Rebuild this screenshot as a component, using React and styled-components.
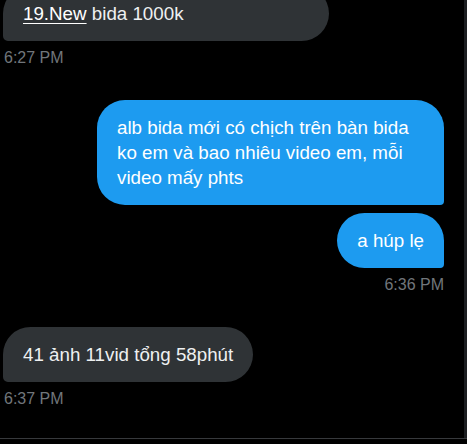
import React from "react";
import styled, { createGlobalStyle } from "styled-components";

const GlobalStyle = createGlobalStyle`
  html, body {
    margin: 0;
    padding: 0;
    background: #000;
  }
  body {
    font-family: "Liberation Sans", Arial, sans-serif;
    -webkit-font-smoothing: antialiased;
  }
`;

const Screen = styled.div`
  width: 467px;
  height: 444px;
  display: flex;
  flex-direction: column;
  background: #000;
  overflow: hidden;
`;

const Body = styled.div`
  display: flex;
  height: 438px;
  border-bottom: 1px solid #37393c;
`;

const Conversation = styled.div`
  flex: 1;
  padding: 0 20px 0 3px;
  overflow: hidden;
`;

const ScrollTrack = styled.div`
  width: 3px;
  background: #1c1e21;
`;

// scrolled: the first bubble starts above the visible area
const Thread = styled.div`
  display: flex;
  flex-direction: column;
  margin-top: -14px;
`;

const Group = styled.div`
  display: flex;
  flex-direction: column;
  align-items: ${(p) => (p.$sent ? "flex-end" : "flex-start")};
  padding-bottom: 32px;
`;

const Stack = styled.div`
  display: flex;
  flex-direction: column;
  align-items: inherit;
  gap: 8px;
`;

const Bubble = styled.div`
  box-sizing: border-box;
  max-width: 347px;
  width: ${(p) => (p.$width ? `${p.$width}px` : "auto")};
  padding: 15px 20px;
  font-size: 18.75px;
  line-height: 25px;
  color: ${(p) => (p.$sent ? "#ffffff" : "#eef0f1")};
  background: ${(p) => (p.$sent ? "#1d9bf0" : "#2f3336")};
  border-radius: ${(p) => (p.$sent ? "28px 28px 4px 28px" : "28px 28px 28px 5px")};
  word-wrap: break-word;
`;

const LinkText = styled.span`
  color: #ffffff;
  text-decoration: underline;
  text-underline-offset: 3px;
`;

const Time = styled.div`
  margin-top: 7px;
  padding-left: ${(p) => (p.$sent ? "0" : "1px")};
  font-size: 16px;
  line-height: 20px;
  color: #71767b;
`;

const groups = [
  {
    sent: false,
    time: "6:27 PM",
    messages: [
      {
        width: 326,
        text: (
          <>
            <LinkText>19.New</LinkText> bida 1000k
          </>
        ),
      },
    ],
  },
  {
    sent: true,
    time: "6:36 PM",
    messages: [
      { text: "alb bida mới có chịch trên bàn bida ko em và bao nhiêu video em, mỗi video mấy phts" },
      { text: "a húp lẹ" },
    ],
  },
  {
    sent: false,
    time: "6:37 PM",
    messages: [{ text: "41 ảnh 11vid tổng 58phút" }],
  },
];

export default function App() {
  return (
    <>
      <GlobalStyle />
      <Screen>
        <Body>
          <Conversation>
            <Thread>
              {groups.map((group, index) => (
                <Group key={index} $sent={group.sent}>
                  <Stack>
                    {group.messages.map((msg, i) => (
                      <Bubble key={i} $sent={group.sent} $width={msg.width}>
                        {msg.text}
                      </Bubble>
                    ))}
                  </Stack>
                  <Time $sent={group.sent}>{group.time}</Time>
                </Group>
              ))}
            </Thread>
          </Conversation>
          <ScrollTrack />
        </Body>
      </Screen>
    </>
  );
}
